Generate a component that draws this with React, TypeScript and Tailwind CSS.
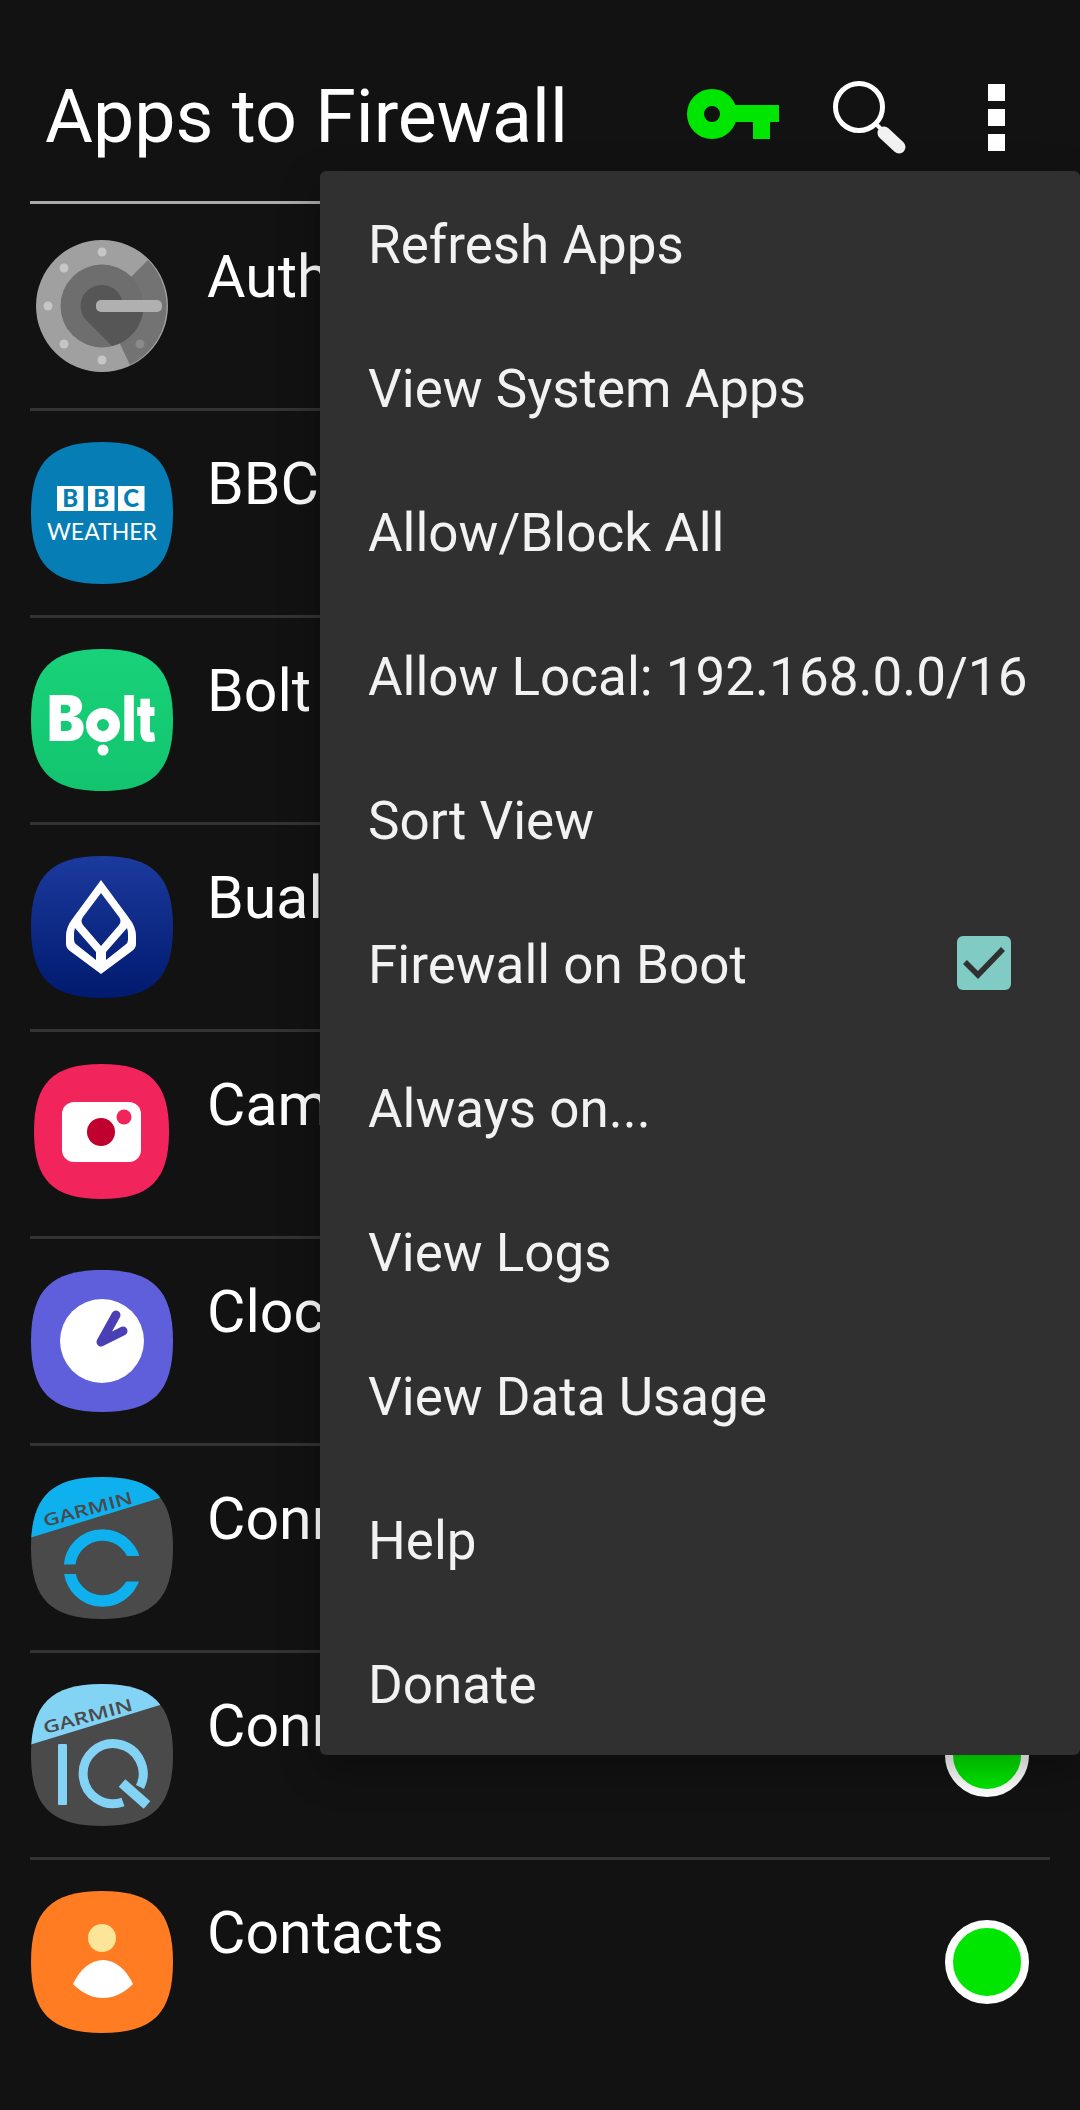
import type { ReactNode } from 'react';

const SQUIRCLE = 'M71 0C122 0 142 20 142 71C142 122 122 142 71 142C20 142 0 122 0 71C0 20 20 0 71 0Z';

function IconBox({ children }: { children: ReactNode }) {
  return (
    <svg viewBox="0 0 142 142" className="w-[142px] h-[142px] shrink-0">
      {children}
    </svg>
  );
}

function AuthIcon() {
  return (
    <IconBox>
      <circle cx="71" cy="71" r="66" fill="#a0a0a0" />
      <path d="M71 71L117 25A66 66 0 0 1 99 130Z" fill="#737373" />
      <circle cx="71" cy="71" r="41.500" fill="#6e6e6e" />
      <path d="M71 50A21 21 0 0 0 55 85L81 111A41 41 0 0 0 112.500 71L92 71A21 21 0 0 0 71 50Z" fill="#565656" />
      <rect x="65" y="65" width="66" height="12" rx="5" fill="#b0b0b0" />
      {[[71, 17], [33, 33], [17, 71], [33, 109], [71, 125]].map(([cx, cy]) => (
        <circle key={`${cx}-${cy}`} cx={cx} cy={cy} r="4.500" fill="#c6c6c6" />
      ))}
      <circle cx="109" cy="109" r="4.500" fill="#8a8a8a" />
    </IconBox>
  );
}

function BbcIcon() {
  return (
    <IconBox>
      <path d={SQUIRCLE} fill="#067db5" />
      {[
        { x: 26, l: 'B' },
        { x: 57, l: 'B' },
        { x: 87, l: 'C' },
      ].map(b => (
        <g key={b.x}>
          <rect x={b.x} y="44" width="26.500" height="25" fill="#fff" />
          <text x={b.x + 13.2} y="65" textAnchor="middle" fontFamily="Lato, sans-serif" fontWeight="900" fontSize="24" fill="#067db5">
            {b.l}
          </text>
        </g>
      ))}
      <text x="16" y="98" textLength="110" lengthAdjust="spacingAndGlyphs" fontFamily="Lato, sans-serif" fontWeight="400" fontSize="23" fill="#fff">
        WEATHER
      </text>
    </IconBox>
  );
}

function BoltIcon() {
  return (
    <IconBox>
      <defs>
        <linearGradient id="boltBg" x1="0" y1="0" x2="0" y2="1">
          <stop offset="0" stopColor="#18d27a" />
          <stop offset="1" stopColor="#13c46f" />
        </linearGradient>
      </defs>
      <path d={SQUIRCLE} fill="url(#boltBg)" />
      <text x="16" y="92" textLength="38" lengthAdjust="spacingAndGlyphs" fontFamily="Inter, sans-serif" fontWeight="900" fontSize="63" fill="#fff">B</text>
      <circle cx="72" cy="76" r="11.500" fill="none" stroke="#fff" strokeWidth="11" />
      <circle cx="72" cy="101" r="5.500" fill="#fff" />
      <text x="91" y="92" textLength="34" lengthAdjust="spacingAndGlyphs" fontFamily="Inter, sans-serif" fontWeight="900" fontSize="63" fill="#fff">lt</text>
    </IconBox>
  );
}

function BualuangIcon() {
  return (
    <IconBox>
      <defs>
        <linearGradient id="bualBg" x1="0" y1="0" x2="0" y2="1">
          <stop offset="0" stopColor="#1c3a9e" />
          <stop offset="1" stopColor="#001a6e" />
        </linearGradient>
      </defs>
      <path d={SQUIRCLE} fill="url(#bualBg)" />
      <path
        fillRule="evenodd"
        fill="#fff"
        d="M70 24L98 62Q105 71 105 80V88Q105 92 101 95L70 118L39 95Q35 92 35 88V80Q35 71 42 62Z
           M70 37L88 61Q91 65 88 69L70 90L52 69Q49 65 52 61Z
           M44 72L65 96V104L46 89Q43 87 43 84V78Q43 75 44 72Z
           M96 72L75 96V104L94 89Q97 87 97 84V78Q97 75 96 72Z"
      />
    </IconBox>
  );
}

function CameraIcon() {
  return (
    <IconBox>
      <path d={SQUIRCLE} transform="translate(3 1) scale(0.951)" fill="#f2245c" />
      <rect x="31" y="39" width="79" height="60" rx="12" fill="#fff" />
      <circle cx="70" cy="69" r="14" fill="#c0002f" />
      <circle cx="93" cy="54" r="7.500" fill="#f2245c" />
    </IconBox>
  );
}

function ClockIcon() {
  return (
    <IconBox>
      <path d={SQUIRCLE} fill="#5f5fdc" />
      <circle cx="71" cy="71" r="42" fill="#fff" />
      <path d="M85 45L70 72L92 61" fill="none" stroke="#4a3fb5" strokeWidth="9" strokeLinecap="round" strokeLinejoin="round" />
    </IconBox>
  );
}

function GarminIcon({ accent, children }: { accent: string; children: ReactNode }) {
  const clipId = `garmin-${accent.slice(1)}`;
  return (
    <IconBox>
      <defs>
        <clipPath id={clipId}>
          <path d={SQUIRCLE} />
        </clipPath>
      </defs>
      <path d={SQUIRCLE} fill="#4a4a4a" />
      <path d="M0 60.500L129 21L129 0L0 0Z" fill={accent} clipPath={`url(#${clipId})`} />
      <text x="14" y="50" transform="rotate(-15 14 50)" textLength="92" lengthAdjust="spacingAndGlyphs" fontFamily="Open Sans, sans-serif" fontWeight="600" fontSize="17" fill="#4a4a4a">
        GARMIN
      </text>
      {children}
    </IconBox>
  );
}

function ConnectRing() {
  return (
    <>
      <defs>
        <clipPath id="ringTop">
          <path d="M0 0H142V79H72V87.500H0Z" />
        </clipPath>
        <clipPath id="ringBottom">
          <path d="M0 97H72V104.500H142V142H0Z" />
        </clipPath>
      </defs>
      <circle cx="71.500" cy="91" r="33" fill="none" stroke="#0fb0ee" strokeWidth="11.500" clipPath="url(#ringTop)" />
      <circle cx="71.500" cy="91" r="33" fill="none" stroke="#0fb0ee" strokeWidth="11.500" clipPath="url(#ringBottom)" />
    </>
  );
}

function ContactsIcon() {
  return (
    <IconBox>
      <path d={SQUIRCLE} fill="#ff7c22" />
      <ellipse cx="71" cy="47" rx="14" ry="14" fill="#fce598" />
      <path d="M42 93C49 78 60 69 72 69C84 69 95 78 102 93C92 103 82 107 72 107C62 107 52 103 42 93Z" fill="#fff" />
    </IconBox>
  );
}

const APPS: { name: string; icon: ReactNode }[] = [
  { name: 'Authenticator', icon: <AuthIcon /> },
  { name: 'BBC Weather', icon: <BbcIcon /> },
  { name: 'Bolt', icon: <BoltIcon /> },
  { name: 'Bualuang mBanking', icon: <BualuangIcon /> },
  { name: 'Camera', icon: <CameraIcon /> },
  { name: 'Clock', icon: <ClockIcon /> },
  {
    name: 'Connect',
    icon: (
      <GarminIcon accent="#0fb0ee">
        <ConnectRing />
      </GarminIcon>
    ),
  },
  {
    name: 'Connect IQ',
    icon: (
      <GarminIcon accent="#83d3f5">
        <rect x="27" y="60" width="9" height="61" rx="1" fill="#83d3f5" />
        <g fill="none" stroke="#83d3f5" strokeWidth="9">
          <path d="M92 118A30 30 0 1 1 109 103" />
          <path d="M91 99L116 121" strokeWidth="10" />
        </g>
      </GarminIcon>
    ),
  },
  { name: 'Contacts', icon: <ContactsIcon /> },
];

const MENU_ITEMS = [
  'Refresh Apps',
  'View System Apps',
  'Allow/Block All',
  'Allow Local: 192.168.0.0/16',
  'Sort View',
  'Firewall on Boot',
  'Always on...',
  'View Logs',
  'View Data Usage',
  'Help',
  'Donate',
];

export default function App() {
  return (
    <div className="relative w-[1080px] h-[2110px] overflow-hidden bg-[#121212] text-white font-['Roboto',sans-serif]">
      {/* Toolbar */}
      <div className="h-[201px] pt-[80px]">
        <div className="flex items-center h-[70px] pl-[45px] pr-[75px]">
          <h1 className="text-[73.5px] leading-[70px] font-normal whitespace-nowrap pt-[3px]">Apps to Firewall</h1>
          <svg viewBox="0 0 92 50" className="ml-auto w-[92px] h-[50px] -mt-[2px]">
            <circle cx="25" cy="25" r="16.500" fill="none" stroke="#00e600" strokeWidth="17" />
            <path d="M40 16H92V33H83V50H66V33H40Z" fill="#00e600" />
          </svg>
          <svg viewBox="0 0 74 73" className="ml-[54px] w-[74px] h-[73px] mt-[5px]">
            <circle cx="26" cy="26" r="23.500" fill="none" stroke="#fff" strokeWidth="5" />
            <path d="M43 43L52 52" stroke="#fff" strokeWidth="4" />
            <path d="M51 52L66 66" stroke="#f2f2f2" strokeWidth="13" strokeLinecap="round" />
          </svg>
          <div className="ml-[81px] flex flex-col gap-[8px] mt-[4px]">
            <div className="w-[17px] h-[17px] bg-white" />
            <div className="w-[17px] h-[17px] bg-white" />
            <div className="w-[17px] h-[17px] bg-white" />
          </div>
        </div>
      </div>

      {/* App list */}
      <div className="mx-[30px] border-t-[3px] border-[#aaaaaa]">
        {APPS.map((app, i) => (
          <div
            key={app.name}
            className={`flex items-start pl-px pr-[21px] ${i < APPS.length - 1 ? 'h-[207px] border-b-[3px] border-[#333333]' : 'h-[204px]'}`}
          >
            <div className="mt-[31px]">{app.icon}</div>
            <div className="ml-[34px] mt-[38px] text-[59px] leading-[70px] whitespace-nowrap">{app.name}</div>
            <div className="ml-auto self-center w-[84px] h-[84px] rounded-full border-[8px] border-white bg-[#00e600]" />
          </div>
        ))}
      </div>

      {/* Overflow menu */}
      <div className="absolute left-[320px] top-[171px] w-[760px] rounded-[6px] bg-[#303030] shadow-[0_14px_40px_rgba(0,0,0,0.3)]">
        {MENU_ITEMS.map(item => (
          <div key={item} className="flex items-center justify-between h-[144px] pl-[48px] pr-[69px] text-[53px] text-[#f2f2f2] whitespace-nowrap">
            <span className="pt-[5px]">{item}</span>
            {item === 'Firewall on Boot' && (
              <div className="w-[54px] h-[54px] rounded-[6px] bg-[#80cbc4]">
                <svg viewBox="0 0 54 54" className="w-[54px] h-[54px]">
                  <path d="M8 26L21 39L46 13" fill="none" stroke="#303030" strokeWidth="5.500" />
                </svg>
              </div>
            )}
          </div>
        ))}
      </div>
    </div>
  );
}
